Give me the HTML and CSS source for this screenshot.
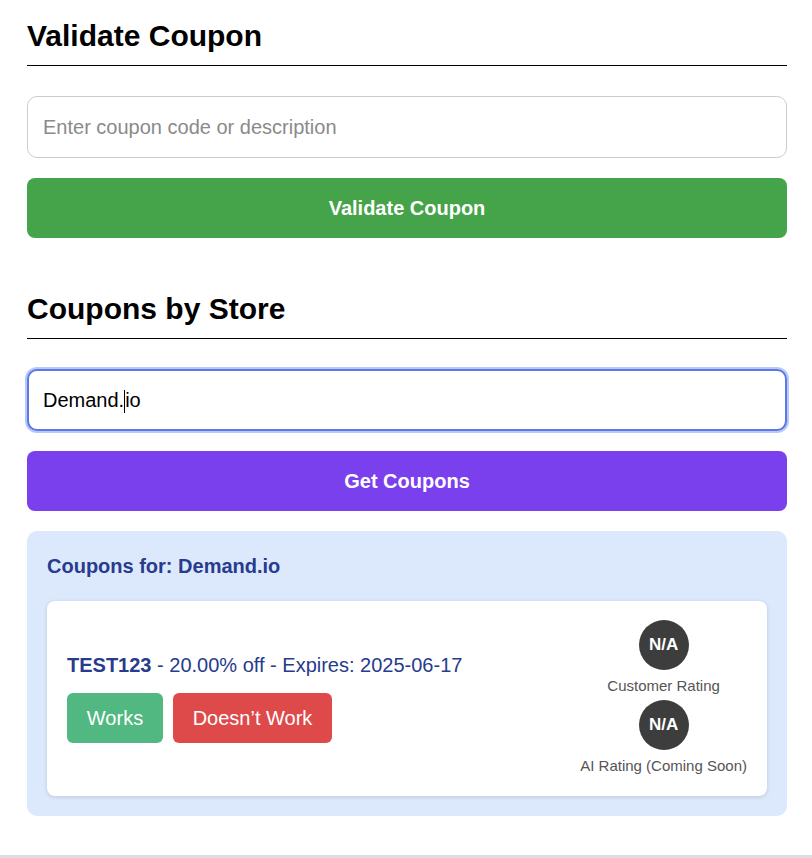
FILE: index.html
```html
<!DOCTYPE html>
<html lang="en">
<head>
<meta charset="utf-8">
<title>Coupons</title>
<link rel="stylesheet" href="styles.css">
</head>
<body>
<main class="page">
  <section class="section">
    <h2 class="section-title">Validate Coupon</h2>
    <input class="field" type="text" placeholder="Enter coupon code or description">
    <button class="btn btn-green">Validate Coupon</button>
  </section>

  <section class="section section-store">
    <h2 class="section-title">Coupons by Store</h2>
    <div class="field field-focus"><span>Demand.</span><span class="caret"></span><span>io</span></div>
    <button class="btn btn-purple">Get Coupons</button>

    <div class="results">
      <h3 class="results-title">Coupons for: Demand.io</h3>
      <div class="coupon-card">
        <div class="coupon-main">
          <p class="coupon-text"><strong>TEST123</strong> - 20.00% off - Expires: 2025-06-17</p>
          <div class="coupon-actions">
            <button class="vote vote-yes">Works</button>
            <button class="vote vote-no">Doesn’t Work</button>
          </div>
        </div>
        <div class="ratings">
          <div class="rating">
            <div class="rating-badge">N/A</div>
            <div class="rating-label">Customer Rating</div>
          </div>
          <div class="rating">
            <div class="rating-badge">N/A</div>
            <div class="rating-label">AI Rating (Coming Soon)</div>
          </div>
        </div>
      </div>
    </div>
  </section>
</main>
<div class="footer-line"></div>
</body>
</html>
```

FILE: styles.css
```css
html, body {
  margin: 0;
  padding: 0;
  background: #ffffff;
  font-family: "Liberation Sans", Arial, sans-serif;
  color: #000;
}

.page {
  width: 760px;
  padding: 18px 0 0 27px;
}

.section {
  display: flex;
  flex-direction: column;
}

.section-store {
  margin-top: 53px;
}

.section-title {
  margin: 0 0 30px 0;
  font-size: 30px;
  font-weight: bold;
  line-height: 35px;
  padding-bottom: 12px;
  border-bottom: 1px solid #000;
}

.field {
  box-sizing: border-box;
  height: 62px;
  width: 100%;
  border: 1px solid #cccccc;
  border-radius: 10px;
  padding: 0 15px;
  font-family: "Liberation Sans", Arial, sans-serif;
  font-size: 20px;
  color: #000;
  background: #fff;
  outline: none;
  margin: 0;
}

.field::placeholder {
  color: #8a8a8a;
}

.field-focus {
  display: flex;
  align-items: center;
  border: 2px solid #5b78e6;
  box-shadow: 0 0 0 2px #b9c8f6;
  padding: 0 14px;
}

.caret {
  display: inline-block;
  width: 1px;
  height: 23px;
  background: #000;
  position: relative;
  top: 1px;
}

.btn {
  margin-top: 20px;
  height: 60px;
  width: 100%;
  border: none;
  border-radius: 8px;
  color: #fff;
  font-family: "Liberation Sans", Arial, sans-serif;
  font-size: 20px;
  font-weight: bold;
  cursor: pointer;
}

.btn-green {
  background: #45a349;
}

.btn-purple {
  background: #7b40ed;
}

.results {
  margin-top: 20px;
  background: #dce9fd;
  border-radius: 10px;
  padding: 20px;
}

.results-title {
  margin: 4px 0 0 0;
  font-size: 20px;
  line-height: 23px;
  font-weight: bold;
  color: #283b8c;
}

.coupon-card {
  margin-top: 23px;
  background: #fff;
  border-radius: 8px;
  box-shadow: 0 1px 4px rgba(0, 0, 0, 0.15);
  padding: 19px 20px 22px 20px;
  display: flex;
  justify-content: space-between;
  align-items: center;
}

.coupon-main {
  padding-top: 3px;
}

.coupon-text {
  margin: 0 0 16px 0;
  font-size: 20px;
  line-height: 23px;
  color: #283b8c;
}

.coupon-text strong {
  color: #283b8c;
}

.coupon-actions {
  display: flex;
  gap: 10px;
}

.vote {
  height: 50px;
  border: none;
  border-radius: 6px;
  color: #fff;
  font-family: "Liberation Sans", Arial, sans-serif;
  font-size: 20px;
  padding: 0;
  cursor: pointer;
}

.vote-yes {
  background: #51b882;
  width: 96px;
}

.vote-no {
  background: #de4a4a;
  width: 159px;
}

.ratings {
  display: flex;
  flex-direction: column;
  align-items: center;
  gap: 6px;
}

.rating {
  display: flex;
  flex-direction: column;
  align-items: center;
}

.rating-badge {
  width: 50px;
  height: 50px;
  border-radius: 50%;
  background: #3d3d3d;
  color: #fff;
  font-weight: bold;
  font-size: 17px;
  display: flex;
  align-items: center;
  justify-content: center;
}

.rating-label {
  margin-top: 7px;
  font-size: 15px;
  line-height: 17px;
  color: #555;
}

.footer-line {
  position: absolute;
  left: 0;
  right: 0;
  top: 855px;
  height: 0;
  border-top: 3px solid #dedede;
}
```
